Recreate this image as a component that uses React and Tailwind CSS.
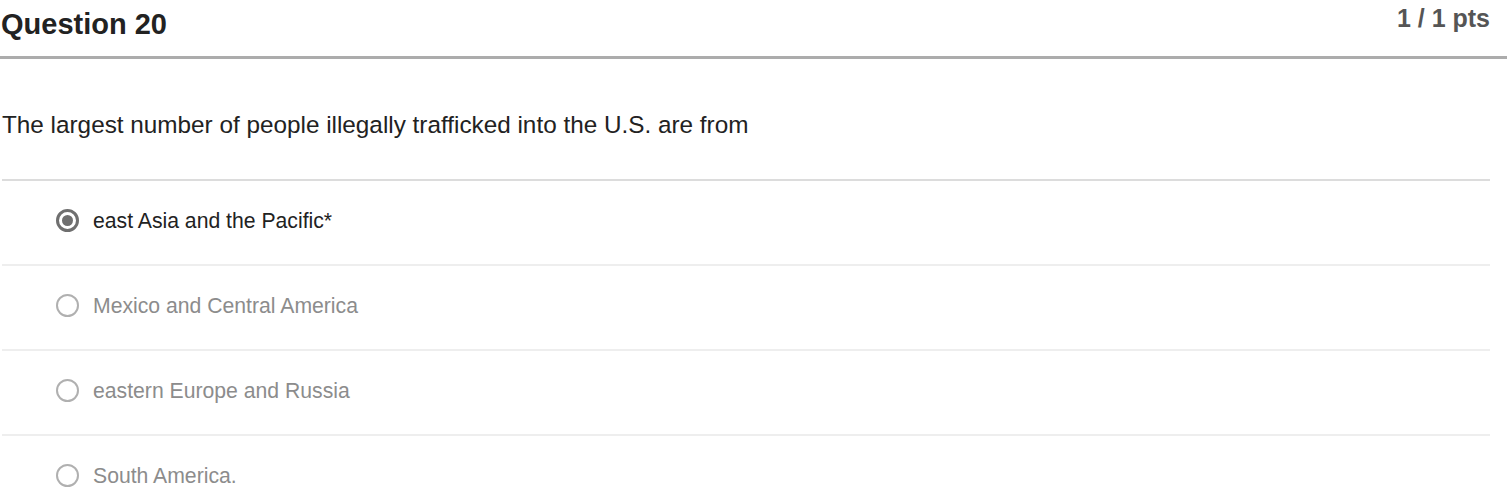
import React from 'react';

const options = [
  { text: 'east Asia and the Pacific*', selected: true },
  { text: 'Mexico and Central America', selected: false },
  { text: 'eastern Europe and Russia', selected: false },
  { text: 'South America.', selected: false },
];

const Radio = ({ selected }) =>
  selected ? (
    <span className="w-[23px] h-[23px] rounded-full border-[3px] border-[#6f6f6f] flex items-center justify-center shrink-0">
      <span className="w-[11px] h-[11px] rounded-full bg-[#6f6f6f]" />
    </span>
  ) : (
    <span className="w-[23px] h-[23px] rounded-full border-[2px] border-[#b0b0b0] shrink-0" />
  );

export default function App() {
  return (
    <div className="w-[1507px] h-[489px] overflow-hidden bg-white font-['Liberation_Sans',Arial,sans-serif]">
      {/* header */}
      <div className="flex justify-between items-start h-[59px] border-b-[3px] border-[#acacac]">
        <h2 className="pl-[1px] pt-[6px] text-[29px] leading-[36px] font-bold text-[#222]">Question 20</h2>
        <div className="pr-[17px] pt-[3px] text-[25px] leading-[30px] font-bold text-[#555]">1 / 1 pts</div>
      </div>

      {/* question */}
      <div className="pl-[2px] pt-[51px] h-[120px] text-[24.3px] leading-[30px] text-[#222]">
        The largest number of people illegally trafficked into the U.S. are from
      </div>

      {/* answers */}
      <div className="ml-[2px] w-[1488px] border-t-[2px] border-[#dcdcdc]">
        {options.map((o, i) => (
          <div key={i} className="h-[85px] flex items-center gap-[14px] pl-[54px] pb-[4px] border-b-[2px] border-[#eeeeee]">
            <Radio selected={o.selected} />
            <span className={`text-[21.2px] leading-[28px] ${o.selected ? 'text-[#222]' : 'text-[#8c8c8c]'}`}>{o.text}</span>
          </div>
        ))}
      </div>
    </div>
  );
}
